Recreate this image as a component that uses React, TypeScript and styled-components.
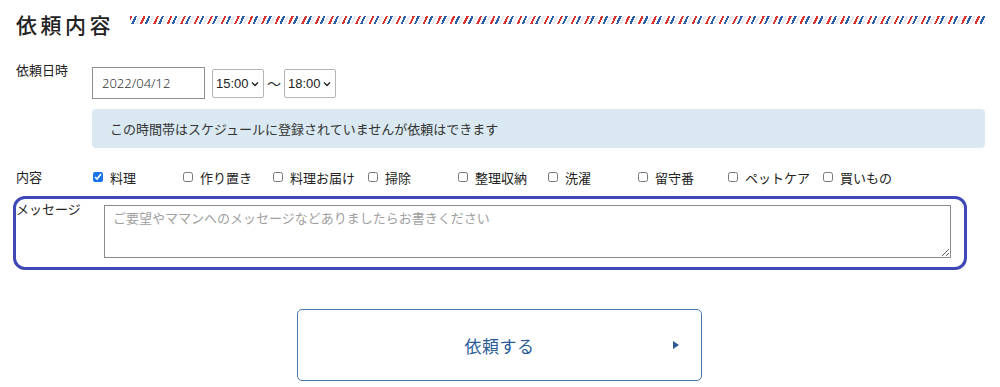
import React from "react";
import styled, { createGlobalStyle } from "styled-components";

const services = [
  { label: "料理", checked: true },
  { label: "作り置き" },
  { label: "料理お届け" },
  { label: "掃除" },
  { label: "整理収納" },
  { label: "洗濯" },
  { label: "留守番" },
  { label: "ペットケア" },
  { label: "買いもの" },
];

const Global = createGlobalStyle`
  body {
    margin: 0;
    background: #fff;
    font-family: "Noto Sans CJK JP", "Noto Sans", sans-serif;
    color: #222;
  }
`;

const Chevron = () => (
  <ChevronIcon width="8" height="6" viewBox="0 0 8 6">
    <path d="M1 1.5 L4 4.5 L7 1.5" fill="none" stroke="#222" strokeWidth="1.4" />
  </ChevronIcon>
);

class App extends React.Component {
  render() {
    return (
      <Page>
        <Global />
        <Heading>
          <Title>依頼内容</Title>
          <Stripe />
        </Heading>

        <Row>
          <Label>依頼日時</Label>
          <Field>
            <DateRow>
              <DateInput defaultValue="2022/04/12" />
              <SelectWrap>
                <TimeSelect defaultValue="15:00">
                  <option>15:00</option>
                </TimeSelect>
                <Chevron />
              </SelectWrap>
              <Tilde>〜</Tilde>
              <SelectWrap>
                <TimeSelect defaultValue="18:00">
                  <option>18:00</option>
                </TimeSelect>
                <Chevron />
              </SelectWrap>
            </DateRow>
            <Notice>この時間帯はスケジュールに登録されていませんが依頼はできます</Notice>
          </Field>
        </Row>

        <CheckRow>
          <Label>内容</Label>
          <Checks>
            {services.map((s) => (
              <CheckItem key={s.label}>
                <Box type="checkbox" defaultChecked={s.checked} />
                <span>{s.label}</span>
              </CheckItem>
            ))}
          </Checks>
        </CheckRow>

        <MessageRow>
          <Label>メッセージ</Label>
          <Message placeholder="ご要望やママンへのメッセージなどありましたらお書きください" />
        </MessageRow>

        <Submit type="button">
          <span />
          <SubmitText>依頼する</SubmitText>
          <Arrow />
        </Submit>
      </Page>
    );
  }
}

const Page = styled.div`
  width: 1000px;
  height: 387px;
  box-sizing: border-box;
  padding: 0 15px 0 16px;
  overflow: hidden;
`;

const Heading = styled.div`
  display: flex;
  align-items: center;
  height: 47px;
`;

const Title = styled.h2`
  margin: 0;
  font-size: 21px;
  font-weight: 500;
  letter-spacing: 3.5px;
  color: #222;
  white-space: nowrap;
`;

const Stripe = styled.div`
  flex: 1;
  height: 8px;
  margin: 0 0 8px 16px;
  background: repeating-linear-gradient(
    115deg,
    #d9322f 0px,
    #d9322f 2px,
    #fff 2px,
    #fff 4.5px,
    #2a5ea8 4.5px,
    #2a5ea8 6.5px,
    #fff 6.5px,
    #fff 8px,
    #e6e9ef 8px,
    #e6e9ef 10px,
    #fff 10px,
    #fff 12.2px
  );
`;

const Row = styled.div`
  display: flex;
  margin-top: 13px;
`;

const Label = styled.div`
  width: 76px;
  flex-shrink: 0;
  font-size: 13px;
  line-height: 20px;
  color: #222;
  white-space: nowrap;
`;

const Field = styled.div`
  flex: 1;
  padding-top: 7px;
`;

const DateRow = styled.div`
  display: flex;
  align-items: center;
`;

const DateInput = styled.input`
  box-sizing: border-box;
  width: 113px;
  height: 32px;
  padding: 0 9px;
  border: 1px solid #8f8f8f;
  border-radius: 0;
  font-family: "Noto Sans", sans-serif;
  font-size: 13px;
  font-weight: 300;
  color: #333;
  margin-right: 7px;
`;

const SelectWrap = styled.span`
  position: relative;
  display: inline-flex;
`;

const TimeSelect = styled.select`
  appearance: none;
  box-sizing: border-box;
  width: 52px;
  height: 29px;
  padding: 0 0 0 3px;
  border: 1px solid #b5b5b5;
  border-radius: 2px;
  background: #fff;
  font-family: "Liberation Sans", Arial, sans-serif;
  font-size: 13px;
  color: #222;
`;

const ChevronIcon = styled.svg`
  position: absolute;
  right: 5px;
  top: 12px;
  pointer-events: none;
`;

const Tilde = styled.span`
  width: 20px;
  text-align: center;
  font-size: 14px;
  color: #333;
`;

const Notice = styled.div`
  margin-top: 10px;
  height: 39px;
  display: flex;
  align-items: center;
  padding-left: 18px;
  background: #dae9f1;
  border-radius: 4px;
  font-size: 13px;
  color: #333;
`;

const CheckRow = styled.div`
  display: flex;
  align-items: center;
  margin-top: 18px;
  height: 22px;
`;

const Checks = styled.div`
  display: flex;
  align-items: center;
  padding-left: 1px;
`;

const CheckItem = styled.label`
  display: flex;
  align-items: center;
  gap: 7px;
  min-width: 77px;
  margin-right: 13px;
  font-size: 13px;
  color: #222;
  white-space: nowrap;
`;

const Box = styled.input`
  width: 10px;
  height: 10px;
  margin: 0;
  accent-color: #1a73e8;
`;

const MessageRow = styled.div`
  display: flex;
  align-items: flex-start;
  margin: 8px 18px 0 -3px;
  padding: 0 13px 9px 0;
  border: 3px solid #3f48b6;
  border-radius: 12px;
`;

const Message = styled.textarea`
  flex: 1;
  box-sizing: border-box;
  height: 53px;
  margin: 6px 0 0 12px;
  padding: 3px 8px;
  border: 1px solid #8a8a8a;
  border-radius: 0;
  font-family: "Noto Sans CJK JP", sans-serif;
  font-size: 13px;
  line-height: 18px;
  color: #333;
  &::placeholder {
    color: #a0a0a0;
  }
`;

const Submit = styled.button`
  display: grid;
  grid-template-columns: 1fr auto 1fr;
  align-items: center;
  box-sizing: border-box;
  width: 405px;
  height: 72px;
  margin: 39px auto 0;
  padding: 0 22px;
  border: 1px solid #4a78a8;
  border-radius: 5px;
  background: #fff;
  cursor: pointer;
  transform: translateX(-1px);
`;

const SubmitText = styled.span`
  font-family: "Noto Sans CJK JP", sans-serif;
  font-size: 17px;
  color: #2b5c96;
  letter-spacing: 0.5px;
`;

const Arrow = styled.span`
  justify-self: end;
  width: 0;
  height: 0;
  border-top: 4px solid transparent;
  border-bottom: 4px solid transparent;
  border-left: 6px solid #2a5a90;
`;

export default App;
